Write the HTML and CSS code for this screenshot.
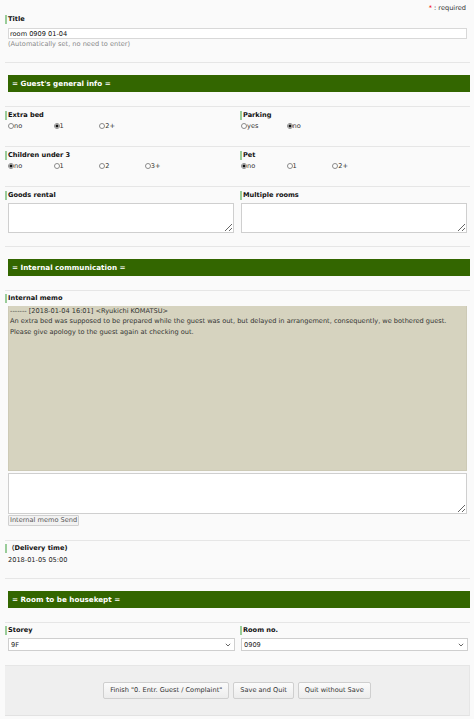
FILE: index.html
```
<!DOCTYPE html>
<html lang="en">
<head>
<meta charset="utf-8">
<title>Room report</title>
<link rel="stylesheet" href="styles.css">
</head>
<body>
<div class="page">
  <div class="req"><span class="star">*</span> : required</div>

  <div class="row row-title">
    <div class="lbl">Title</div>
    <input class="txt" type="text" value="room 0909 01-04">
    <div class="help">(Automatically set, no need to enter)</div>
  </div>

  <div class="section"><div class="head">= Guest's general info =</div></div>

  <div class="row grid row-radio">
    <div class="cell">
      <div class="lbl">Extra bed</div>
      <div class="opts">
        <label class="opt"><input type="radio" name="bed">no</label>
        <label class="opt"><input type="radio" name="bed" checked>1</label>
        <label class="opt"><input type="radio" name="bed">2+</label>
      </div>
    </div>
    <div class="cell">
      <div class="lbl">Parking</div>
      <div class="opts">
        <label class="opt"><input type="radio" name="park">yes</label>
        <label class="opt"><input type="radio" name="park" checked>no</label>
      </div>
    </div>
  </div>

  <div class="row grid row-radio">
    <div class="cell">
      <div class="lbl">Children under 3</div>
      <div class="opts">
        <label class="opt"><input type="radio" name="kids" checked>no</label>
        <label class="opt"><input type="radio" name="kids">1</label>
        <label class="opt"><input type="radio" name="kids">2</label>
        <label class="opt"><input type="radio" name="kids">3+</label>
      </div>
    </div>
    <div class="cell">
      <div class="lbl">Pet</div>
      <div class="opts">
        <label class="opt"><input type="radio" name="pet" checked>no</label>
        <label class="opt"><input type="radio" name="pet">1</label>
        <label class="opt"><input type="radio" name="pet">2+</label>
      </div>
    </div>
  </div>

  <div class="row grid row-area">
    <div class="cell">
      <div class="lbl">Goods rental</div>
      <textarea class="area"></textarea>
    </div>
    <div class="cell">
      <div class="lbl">Multiple rooms</div>
      <textarea class="area"></textarea>
    </div>
  </div>

  <div class="section"><div class="head">= Internal communication =</div></div>

  <div class="row row-memo">
    <div class="lbl">Internal memo</div>
    <div class="memo">
      <div>------- [2018-01-04 16:01] &lt;Ryukichi KOMATSU&gt;</div>
      <div>An extra bed was supposed to be prepared while the guest was out, but delayed in arrangement, consequently, we bothered guest.</div>
      <div>Please give apology to the guest again at checking out.</div>
    </div>
    <textarea class="memo-input"></textarea>
    <button class="send" type="button">Internal memo Send</button>
  </div>

  <div class="row row-delivery">
    <div class="lbl">（Delivery time)</div>
    <div class="value">2018-01-05 05:00</div>
  </div>

  <div class="section"><div class="head">= Room to be housekept =</div></div>

  <div class="row grid row-select">
    <div class="cell">
      <div class="lbl">Storey</div>
      <div class="sel">
        <select><option>9F</option></select>
        <svg class="chev" viewBox="0 0 6 4" width="6" height="4"><path d="M0.8 0.8 L3 3 L5.2 0.8" fill="none" stroke="#555" stroke-width="0.9"/></svg>
      </div>
    </div>
    <div class="cell">
      <div class="lbl">Room no.</div>
      <div class="sel">
        <select><option>0909</option></select>
        <svg class="chev" viewBox="0 0 6 4" width="6" height="4"><path d="M0.8 0.8 L3 3 L5.2 0.8" fill="none" stroke="#555" stroke-width="0.9"/></svg>
      </div>
    </div>
  </div>

  <div class="footer">
    <button class="btn" type="button">Finish "0. Entr. Guest / Complaint"</button>
    <button class="btn" type="button">Save and Quit</button>
    <button class="btn" type="button">Quit without Save</button>
  </div>
</div>
</body>
</html>
```

FILE: styles.css
```
html, body {
  margin: 0;
  padding: 0;
  background: #fafafa;
}
body {
  font-family: "DejaVu Sans", "Noto Sans CJK JP", sans-serif;
  font-size: 6.6px;
  color: #222;
  width: 474px;
  height: 719px;
  overflow: hidden;
}
.page {
  margin: 0 4px 0 5px;
}
.req {
  height: 13px;
  line-height: 10px;
  padding-top: 3px;
  box-sizing: border-box;
  text-align: right;
  padding-right: 4px;
  color: #333;
}
.star { color: #e00; }

.row {
  border-bottom: 1px solid #e6e6e6;
  box-sizing: border-box;
}
.section {
  border-bottom: 1px solid #e6e6e6;
  padding: 12px 0 14px 3px;
}
.head {
  height: 17px;
  line-height: 17px;
  background: #336600;
  color: #fff;
  font-weight: bold;
  font-size: 7.2px;
  padding-left: 4px;
}

.lbl {
  font-weight: bold;
  line-height: 9px;
  height: 9px;
  border-left: 2px solid #9c9;
  padding-left: 1px;
  color: #111;
}
.grid {
  display: grid;
  grid-template-columns: 235px 1fr;
}
.cell {
  padding: 0 3px 0 0;
}
.cell + .cell { padding-left: 0; }
.cell + .cell .area,
.cell + .cell .sel,
.cell + .cell .opts { margin-left: 1px; }

/* Title row */
.row-title {
  padding: 2px 0 13px 0;
}
.txt {
  display: block;
  box-sizing: border-box;
  margin: 4px 0 0 3px;
  width: 459px;
  height: 11px;
  border: 1px solid #d8d8d8;
  background: #fff;
  font: inherit;
  color: #111;
  padding: 0 1px;
  outline: none;
}
.help {
  line-height: 9px;
  margin: 1px 0 0 3px;
  color: #888;
}

/* Radios */
.row-radio {
  padding: 4px 0 15px 0;
}
.opts {
  display: flex;
  height: 10px;
  line-height: 10px;
  margin-left: 3px;
  margin-top: 1px;
}
.opt {
  display: flex;
  align-items: center;
  width: 45.6px;
  color: #333;
}
.opt input {
  appearance: none;
  -webkit-appearance: none;
  margin: 0;
  width: 6px;
  height: 6px;
  border: 1px solid #8a8a8a;
  border-radius: 50%;
  background: #fff;
  box-sizing: border-box;
}
.opt input:checked {
  background: radial-gradient(circle, #111 0 1.3px, #fff 1.8px);
}

/* Textareas */
.row-area {
  padding: 4px 0 13px 0;
}
.area {
  display: block;
  box-sizing: border-box;
  margin: 3px 0 0 3px;
  width: 226px;
  height: 30px;
  border: 1px solid #cfcfcf;
  background: #fff;
  resize: vertical;
  font: inherit;
  outline: none;
}

/* Memo */
.row-memo {
  padding: 3px 0 14px 0;
}
.memo {
  box-sizing: border-box;
  margin: 3px 0 0 3px;
  width: 459px;
  height: 165px;
  background: #d6d3bf;
  border: 1px solid #cdcab6;
  border-top: 0;
  padding: 0 1px;
  line-height: 10.4px;
  color: #333;
}
.memo-input {
  display: block;
  box-sizing: border-box;
  margin: 2px 0 0 3px;
  width: 459px;
  height: 41px;
  border: 1px solid #cfcfcf;
  background: #fff;
  resize: vertical;
  font: inherit;
  outline: none;
}
.send {
  display: block;
  margin: 1px 0 0 3px;
  height: 11px;
  width: auto;
  white-space: nowrap;
  padding: 0 1px;
  font: inherit;
  color: #555;
  background: #f2f2f2;
  border: 1px solid #d0d0d0;
  border-radius: 1px;
  line-height: 9px;
}

/* Delivery */
.row-delivery {
  padding: 3px 0 13px 0;
}
.value {
  margin: 2px 0 0 3px;
  line-height: 10px;
}

/* Selects */
.row-select {
  padding: 3px 0 14px 0;
}
.sel {
  position: relative;
  margin: 3px 0 0 3px;
  width: 227px;
}
.sel select {
  appearance: none;
  -webkit-appearance: none;
  display: block;
  box-sizing: border-box;
  width: 100%;
  height: 13px;
  border: 1px solid #cfcfcf;
  border-radius: 0;
  background: #fff;
  font: inherit;
  color: #222;
  padding: 0 2px;
  outline: none;
}
.chev {
  position: absolute;
  right: 4px;
  top: 5px;
}

/* Footer */
.footer {
  height: 50px;
  box-sizing: border-box;
  background: #efefef;
  border-bottom: 1px solid #e2e2e2;
  border-right: 1px solid #e6e6e6;
  display: flex;
  justify-content: center;
  align-items: center;
  gap: 4px;
  padding-bottom: 1px;
}
.btn {
  height: 17px;
  padding: 0 6px;
  font: inherit;
  color: #333;
  background: linear-gradient(#fbfbfb, #ececec);
  border: 1px solid #cfcfcf;
  border-radius: 2px;
}
```
